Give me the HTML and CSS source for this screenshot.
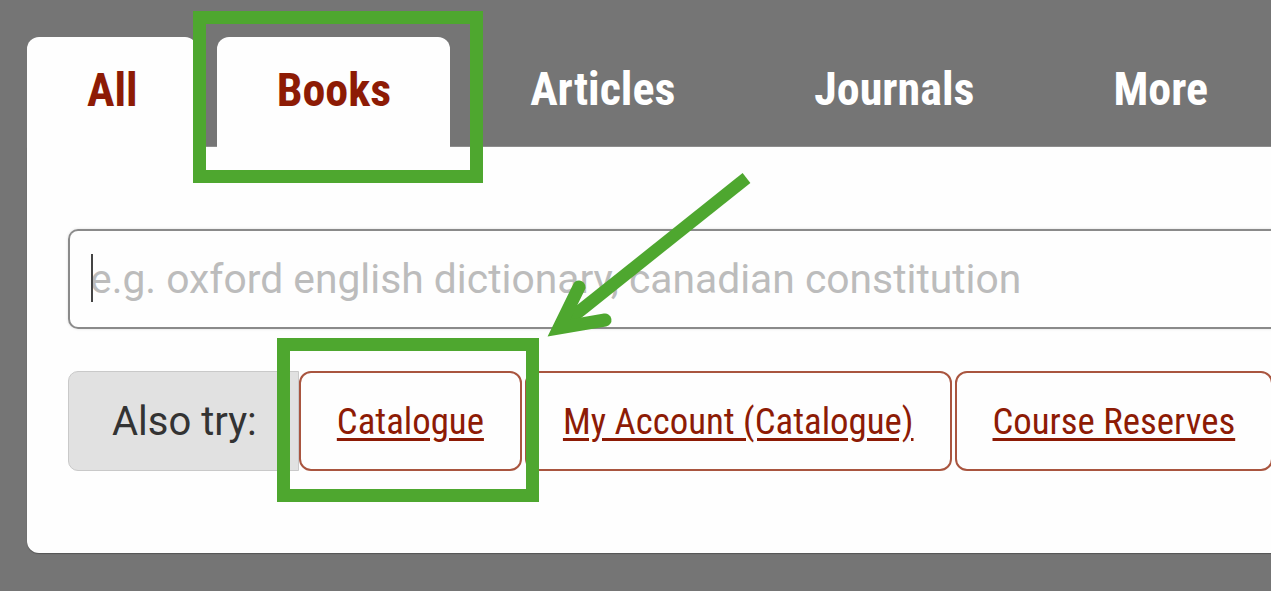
FILE: index.html
```html
<html>
	<head>
		<link rel="stylesheet" href="styles.css">
	</head>
	<body>
		<div class="search">
			<ul class="tabs">
				<li class="tab active">All</li>
				<li class="tab active">Books</li>
				<li class="tab">Articles</li>
				<li class="tab">Journals</li>
				<li class="tab">More</li>
			</ul>
			<div class="panel">
				<div class="field">
					<span class="caret"></span>
					<input type="text" placeholder="e.g. oxford english dictionary, canadian constitution"/>
				</div>
				<div class="also">
					<span class="label">Also try:</span>
					<a href="#" class="btn">Catalogue</a>
					<a href="#" class="btn">My Account (Catalogue)</a>
					<a href="#" class="btn">Course Reserves</a>
				</div>
			</div>
		</div>
		<svg class="marks" width="1271" height="591" viewBox="0 0 1271 591">
			<rect x="199.5" y="17.5" width="277" height="159" fill="none" stroke="#4ea72f" stroke-width="13"/>
			<rect x="283.5" y="344.5" width="249" height="151" fill="none" stroke="#4ea72f" stroke-width="13"/>
			<line x1="746.5" y1="178" x2="566" y2="322" stroke="#4ea72f" stroke-width="12.5"/>
			<polyline points="579,287 559,328 605,320" fill="none" stroke="#4ea72f" stroke-width="13" stroke-linecap="round" stroke-linejoin="miter"/>
		</svg>
	</body>
</html>
```

FILE: styles.css
```css
body {
	background-color: #757575;
	margin: 0;
	overflow: hidden;
	font-family: Roboto, "Liberation Sans", sans-serif;
}
.search {
	padding: 37px 0 0 27px;
	width: 1400px;
}
.tabs {
	display: flex;
	gap: 20px;
	margin: 0;
	padding: 0;
	list-style: none;
	border-bottom: 1px solid #8d8d8d;
}
.tab {
	height: 109px;
	padding: 0 59px 5px 60px;
	box-sizing: border-box;
	display: flex;
	align-items: center;
	border-radius: 12px 12px 0 0;
	font-family: "Roboto Condensed", "Liberation Sans Narrow", "DejaVu Sans Condensed", sans-serif;
	font-weight: bold;
	font-size: 46px;
	color: #fff;
}
.tab.active {
	background-color: #fefefe;
	color: #8d1b05;
	margin-bottom: -1px;
	height: 110px;
}
.panel {
	background-color: #fefefe;
	border-radius: 0 0 0 12px;
	padding: 82px 0 82px 41px;
	box-shadow: 0 1px 1px #555;
}
.field {
	position: relative;
	border: 2px solid #8a8a8a;
	border-radius: 10px 0 0 10px;
	border-right: none;
	height: 96px;
	display: flex;
	align-items: center;
	box-shadow: 0 0 3px #ddd;
}
.field input {
	border: none;
	outline: none;
	background: transparent;
	width: 100%;
	padding: 0 0 0 20px;
	font-family: Roboto, sans-serif;
	font-size: 40.8px;
	color: #333;
}
.field input::placeholder { color: #bcbcbc }
.caret {
	position: absolute;
	left: 21px;
	top: 23px;
	width: 2px;
	height: 48px;
	background: #444;
}
.also {
	display: flex;
	margin-top: 42px;
	height: 100px;
}
.also .label {
	display: flex;
	align-items: center;
	padding: 0 41px 0 43px;
	background-color: #e1e1e1;
	border: 1px solid #c9c9c9;
	border-radius: 10px 0 0 10px;
	font-size: 40px;
	color: #333;
}
.btn {
	display: flex;
	align-items: center;
	padding: 0 36px;
	margin-right: 3px;
	border: 2px solid #a9553f;
	border-radius: 12px;
	font-family: "Roboto Condensed", "Liberation Sans Narrow", "DejaVu Sans Condensed", sans-serif;
	font-size: 36.8px;
	color: #8d1b05;
	text-decoration: underline;
	text-underline-offset: 4px;
}
.marks {
	position: absolute;
	top: 0;
	left: 0;
	pointer-events: none;
}
```
